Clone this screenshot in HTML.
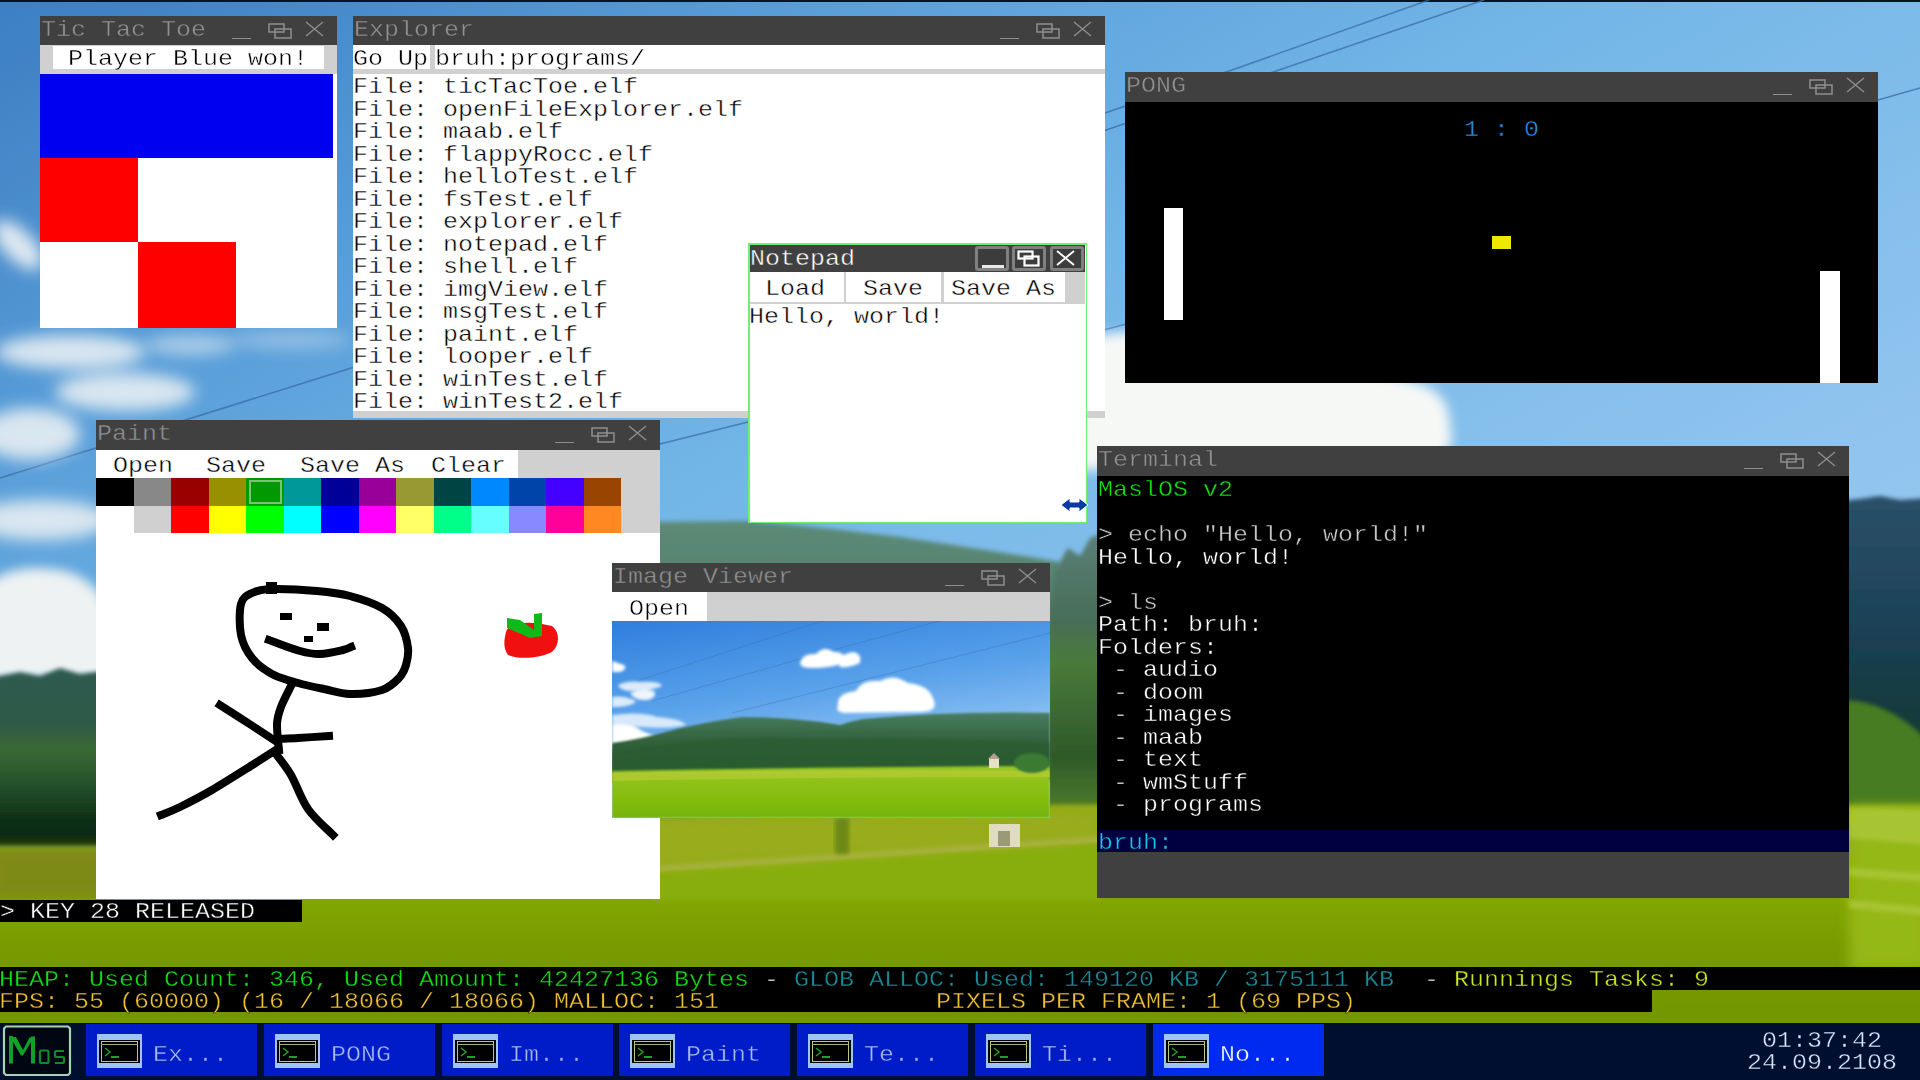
<!DOCTYPE html><html><head><meta charset="utf-8"><style>
html,body{margin:0;padding:0}
body{width:1920px;height:1080px;overflow:hidden;position:relative;background:#6aa8dc}
.r{position:absolute}
.t{position:absolute;font-family:"Liberation Mono",monospace;font-size:22px;line-height:22.5px;white-space:pre;transform-origin:0 0;transform:scaleX(1.136)}
</style></head><body>
<svg class="r" style="left:0;top:0" width="1920" height="1080" viewBox="0 0 1920 1080">
<defs>
<linearGradient id="sky" gradientUnits="userSpaceOnUse" x1="0" y1="0" x2="901" y2="1641">
<stop offset="0" stop-color="#3c80c4"/>
<stop offset="0.06" stop-color="#4486c7"/>
<stop offset="0.19" stop-color="#559bd7"/>
<stop offset="0.405" stop-color="#72b6e7"/>
<stop offset="0.68" stop-color="#90c4ee"/>
<stop offset="1" stop-color="#a0ccf0"/>
</linearGradient>
<linearGradient id="field" gradientUnits="userSpaceOnUse" x1="0" y1="800" x2="0" y2="1080">
<stop offset="0" stop-color="#96aa14"/>
<stop offset="0.3" stop-color="#86aa04"/>
<stop offset="0.55" stop-color="#769a00"/>
<stop offset="1" stop-color="#709400"/>
</linearGradient>
<linearGradient id="hill" gradientUnits="userSpaceOnUse" x1="0" y1="520" x2="0" y2="830">
<stop offset="0" stop-color="#5c8a78"/>
<stop offset="0.4" stop-color="#507e66"/>
<stop offset="1" stop-color="#4a7a48"/>
</linearGradient>
<linearGradient id="trees" gradientUnits="userSpaceOnUse" x1="0" y1="540" x2="0" y2="810">
<stop offset="0" stop-color="#587e76"/>
<stop offset="0.3" stop-color="#486e58"/>
<stop offset="0.45" stop-color="#4a7a3c"/>
<stop offset="0.8" stop-color="#2e5a28"/>
<stop offset="1" stop-color="#4e7c2c"/>
</linearGradient>
<linearGradient id="lforest" gradientUnits="userSpaceOnUse" x1="0" y1="670" x2="0" y2="848">
<stop offset="0" stop-color="#2e5a50"/>
<stop offset="0.3" stop-color="#2e5a48"/>
<stop offset="0.45" stop-color="#3a6a34"/>
<stop offset="0.65" stop-color="#24502a"/>
<stop offset="0.85" stop-color="#0e2e14"/>
<stop offset="1" stop-color="#0a2810"/>
</linearGradient>
<linearGradient id="rforest" gradientUnits="userSpaceOnUse" x1="0" y1="498" x2="0" y2="808">
<stop offset="0" stop-color="#2a5068"/>
<stop offset="0.4" stop-color="#1c4258"/>
<stop offset="0.7" stop-color="#143a3c"/>
<stop offset="1" stop-color="#16382a"/>
</linearGradient>
<filter id="b16" x="-50%" y="-50%" width="200%" height="200%"><feGaussianBlur stdDeviation="14"/></filter>
<filter id="b8" x="-50%" y="-50%" width="200%" height="200%"><feGaussianBlur stdDeviation="8"/></filter>
<filter id="b6" x="-50%" y="-50%" width="200%" height="200%"><feGaussianBlur stdDeviation="6"/></filter>
<filter id="b2" x="-10%" y="-10%" width="120%" height="120%"><feGaussianBlur stdDeviation="2"/></filter>
</defs>
<rect width="1920" height="1080" fill="url(#sky)"/>
<rect y="0" width="1920" height="2" fill="#0a1420"/>
<!-- power lines -->
<g stroke="#3a6aa8" stroke-width="1.6" opacity="0.75" fill="none">
<path d="M0 478 L345 370 L1232 70 L1429 0"/>
<path d="M800 235 L1115 127 L1279 70 L1484 0"/>
<path d="M400 509 L660 444 L748 422 L1115 327 L1130 323"/>
<path d="M1878 100 L1920 88"/>
</g>
<!-- clouds -->
<g filter="url(#b8)" fill="#e8eef2">
<ellipse cx="18" cy="245" rx="32" ry="15" opacity="0.95" transform="rotate(45 18 245)"/>
<ellipse cx="70" cy="352" rx="75" ry="17" opacity="0.9"/>
<ellipse cx="190" cy="345" rx="45" ry="10" opacity="0.6"/>
<ellipse cx="290" cy="340" rx="60" ry="9" opacity="0.4"/>
<ellipse cx="125" cy="392" rx="70" ry="19" opacity="0.9"/>
<ellipse cx="30" cy="434" rx="50" ry="26" opacity="0.9"/>
<ellipse cx="40" cy="520" rx="70" ry="20" opacity="0.9"/>
</g>
<g filter="url(#b6)" fill="#eef2f2">
<path d="M-30 600 Q0 560 60 570 Q110 580 115 640 L115 680 L-30 680Z"/>
<path d="M1070 340 L1120 332 Q1200 330 1300 360 Q1380 370 1420 384 Q1440 390 1448 410 L1452 440 L1440 470 L1070 470Z" fill="#f6f8f6"/>
</g>
<!-- middle hill -->
<path filter="url(#b2)" fill="url(#hill)" d="M650 522 L750 521 Q830 528 900 537 Q1000 552 1060 562 L1060 830 L650 830Z"/>
<path filter="url(#b2)" fill="url(#trees)" d="M1048 620 L1055 570 L1068 548 L1080 556 L1090 538 L1105 532 L1105 810 L1048 810Z"/>
<!-- left forest -->
<path filter="url(#b2)" fill="url(#lforest)" d="M-10 678 L20 672 L40 676 L60 668 L80 674 L110 670 L110 848 L-10 848Z"/>
<!-- right forest -->
<path filter="url(#b2)" fill="url(#rforest)" d="M1830 502 L1860 499 L1880 496 L1900 500 L1930 498 L1930 810 L1830 810Z"/>
<path filter="url(#b2)" fill="#467c22" d="M1840 810 L1840 700 Q1870 700 1895 715 Q1920 730 1930 745 L1930 810Z"/>
<!-- field -->
<path filter="url(#b2)" fill="url(#field)" d="M-10 847 L650 847 L650 818 L1060 805 L1930 805 L1930 1090 L-10 1090Z"/>
<path filter="url(#b6)" fill="#98ac1c" d="M650 818 L1100 810 L1100 840 L650 868Z"/>
<path filter="url(#b2)" fill="#b0b450" opacity="0.7" d="M650 866 L1100 836 L1100 844 L650 874Z"/>
<path filter="url(#b2)" fill="#88ae08" d="M650 874 L1100 844 L1100 900 L650 900Z"/>
<path filter="url(#b6)" fill="#7e8a14" d="M-10 847 L110 847 L110 900 L-10 900Z"/>
<path filter="url(#b6)" fill="#94b814" d="M1849 806 L1930 806 L1930 970 L1849 970Z"/>
<g filter="url(#b2)" fill="#b0ca40" opacity="0.7">
<path d="M1849 808 L1930 810 L1930 845 L1849 838Z"/>
<path d="M1849 868 L1930 874 L1930 882 L1849 876Z"/>
<path d="M1849 900 L1930 908 L1930 916 L1849 908Z"/>
</g>
<rect x="989" y="824" width="31" height="23" fill="#e0dcc4"/>
<rect x="998" y="831" width="12" height="15" fill="#9a9a78"/>
<rect x="835" y="818" width="14" height="36" fill="#5a7a18" opacity="0.7" filter="url(#b2)"/>
</svg>

<div class="r" style="left:40px;top:16px;width:297px;height:29px;background:#404040;"></div>
<div class="t" style="left:41px;top:20px;color:#909090;-webkit-text-stroke:0.4px #404040;">Tic Tac Toe</div>
<div class="r" style="left:232px;top:37.5px;width:19px;height:1.5px;background:#8e8e8e;"></div>
<svg class="r" style="left:268px;top:23px" width="25" height="16"><rect x="1" y="1" width="15" height="8" fill="none" stroke="#8e8e8e" stroke-width="1.5"/><rect x="7" y="6" width="16" height="9" fill="none" stroke="#8e8e8e" stroke-width="1.5"/></svg>
<svg class="r" style="left:305px;top:21px" width="20" height="16"><path d="M1 1L18 15M18 1L1 15" stroke="#8e8e8e" stroke-width="1.4"/></svg>
<div class="r" style="left:40px;top:45px;width:297px;height:29px;background:#d0d0d0;"></div>
<div class="r" style="left:53px;top:46px;width:271px;height:23px;background:#fff;"></div>
<div class="t" style="left:68px;top:49px;color:#000;-webkit-text-stroke:0.4px #fff;">Player Blue won!</div>
<div class="r" style="left:40px;top:74px;width:297px;height:254px;background:#fff;"></div>
<div class="r" style="left:40px;top:74px;width:293px;height:84px;background:#0000f0;"></div>
<div class="r" style="left:40px;top:158px;width:98px;height:84px;background:#ff0000;"></div>
<div class="r" style="left:138px;top:242px;width:98px;height:86px;background:#ff0000;"></div>
<div class="r" style="left:353px;top:16px;width:752px;height:29px;background:#404040;"></div>
<div class="t" style="left:354px;top:20px;color:#909090;-webkit-text-stroke:0.4px #404040;">Explorer</div>
<div class="r" style="left:1000px;top:37.5px;width:19px;height:1.5px;background:#8e8e8e;"></div>
<svg class="r" style="left:1036px;top:23px" width="25" height="16"><rect x="1" y="1" width="15" height="8" fill="none" stroke="#8e8e8e" stroke-width="1.5"/><rect x="7" y="6" width="16" height="9" fill="none" stroke="#8e8e8e" stroke-width="1.5"/></svg>
<svg class="r" style="left:1073px;top:21px" width="20" height="16"><path d="M1 1L18 15M18 1L1 15" stroke="#8e8e8e" stroke-width="1.4"/></svg>
<div class="r" style="left:353px;top:45px;width:752px;height:29px;background:#fff;"></div>
<div class="r" style="left:430px;top:45px;width:5px;height:24px;background:#d0d0d0;"></div>
<div class="r" style="left:353px;top:69px;width:752px;height:5px;background:#d0d0d0;"></div>
<div class="t" style="left:353px;top:49px;color:#000;-webkit-text-stroke:0.4px #fff;">Go Up</div>
<div class="t" style="left:435px;top:49px;color:#000;-webkit-text-stroke:0.4px #fff;">bruh:programs/</div>
<div class="r" style="left:353px;top:74px;width:752px;height:344px;background:#fff;"></div>
<div class="t" style="left:353px;top:77.0px;color:#000;-webkit-text-stroke:0.4px #fff;">File: ticTacToe.elf</div>
<div class="t" style="left:353px;top:99.5px;color:#000;-webkit-text-stroke:0.4px #fff;">File: openFileExplorer.elf</div>
<div class="t" style="left:353px;top:122.0px;color:#000;-webkit-text-stroke:0.4px #fff;">File: maab.elf</div>
<div class="t" style="left:353px;top:144.5px;color:#000;-webkit-text-stroke:0.4px #fff;">File: flappyRocc.elf</div>
<div class="t" style="left:353px;top:167.0px;color:#000;-webkit-text-stroke:0.4px #fff;">File: helloTest.elf</div>
<div class="t" style="left:353px;top:189.5px;color:#000;-webkit-text-stroke:0.4px #fff;">File: fsTest.elf</div>
<div class="t" style="left:353px;top:212.0px;color:#000;-webkit-text-stroke:0.4px #fff;">File: explorer.elf</div>
<div class="t" style="left:353px;top:234.5px;color:#000;-webkit-text-stroke:0.4px #fff;">File: notepad.elf</div>
<div class="t" style="left:353px;top:257.0px;color:#000;-webkit-text-stroke:0.4px #fff;">File: shell.elf</div>
<div class="t" style="left:353px;top:279.5px;color:#000;-webkit-text-stroke:0.4px #fff;">File: imgView.elf</div>
<div class="t" style="left:353px;top:302.0px;color:#000;-webkit-text-stroke:0.4px #fff;">File: msgTest.elf</div>
<div class="t" style="left:353px;top:324.5px;color:#000;-webkit-text-stroke:0.4px #fff;">File: paint.elf</div>
<div class="t" style="left:353px;top:347.0px;color:#000;-webkit-text-stroke:0.4px #fff;">File: looper.elf</div>
<div class="t" style="left:353px;top:369.5px;color:#000;-webkit-text-stroke:0.4px #fff;">File: winTest.elf</div>
<div class="t" style="left:353px;top:392.0px;color:#000;-webkit-text-stroke:0.4px #fff;">File: winTest2.elf</div>
<div class="r" style="left:353px;top:411px;width:752px;height:7px;background:#d0d0d0;"></div>
<div class="r" style="left:1125px;top:72px;width:753px;height:30px;background:#404040;"></div>
<div class="t" style="left:1126px;top:76px;color:#909090;-webkit-text-stroke:0.4px #404040;">PONG</div>
<div class="r" style="left:1773px;top:93.5px;width:19px;height:1.5px;background:#8e8e8e;"></div>
<svg class="r" style="left:1809px;top:79px" width="25" height="16"><rect x="1" y="1" width="15" height="8" fill="none" stroke="#8e8e8e" stroke-width="1.5"/><rect x="7" y="6" width="16" height="9" fill="none" stroke="#8e8e8e" stroke-width="1.5"/></svg>
<svg class="r" style="left:1846px;top:77px" width="20" height="16"><path d="M1 1L18 15M18 1L1 15" stroke="#8e8e8e" stroke-width="1.4"/></svg>
<div class="r" style="left:1125px;top:102px;width:753px;height:281px;background:#000;"></div>
<div class="t" style="left:1464px;top:120px;color:#2a8ee8;-webkit-text-stroke:0.4px #000;">1 : 0</div>
<div class="r" style="left:1164px;top:208px;width:19px;height:112px;background:#fff;"></div>
<div class="r" style="left:1492px;top:236px;width:19px;height:13px;background:#f0e800;"></div>
<div class="r" style="left:1820px;top:271px;width:20px;height:112px;background:#fff;"></div>
<div class="r" style="left:748px;top:243px;width:339px;height:280px;background:#70f070;"></div>
<div class="r" style="left:749.5px;top:244.5px;width:336.0px;height:277.0px;background:#fff;"></div>
<div class="r" style="left:750px;top:245px;width:335px;height:27px;background:#404040;"></div>
<div class="t" style="left:750px;top:249px;color:#ffffff;-webkit-text-stroke:0.4px #404040;">Notepad</div>
<div class="r" style="left:975px;top:246px;width:34px;height:25px;background:#808080;border-radius:3px"></div>
<div class="r" style="left:978px;top:249px;width:28px;height:19px;background:#3c3c3c;"></div>
<div class="r" style="left:1012px;top:246px;width:34px;height:25px;background:#808080;border-radius:3px"></div>
<div class="r" style="left:1015px;top:249px;width:28px;height:19px;background:#3c3c3c;"></div>
<div class="r" style="left:1050px;top:246px;width:34px;height:25px;background:#808080;border-radius:3px"></div>
<div class="r" style="left:1053px;top:249px;width:28px;height:19px;background:#3c3c3c;"></div>
<div class="r" style="left:982px;top:265px;width:22px;height:3px;background:#e8e8e8;"></div>
<svg class="r" style="left:1017px;top:250px" width="26" height="17"><rect x="1.5" y="1.5" width="14" height="7" fill="none" stroke="#fff" stroke-width="2.2"/><rect x="7.5" y="6.5" width="14" height="9" fill="none" stroke="#fff" stroke-width="2.2"/></svg>
<svg class="r" style="left:1055px;top:249px" width="22" height="18"><path d="M2 2L19 16M19 2L2 16" stroke="#fff" stroke-width="1.8"/></svg>
<div class="r" style="left:750px;top:272px;width:335px;height:32px;background:#d0d0d0;"></div>
<div class="r" style="left:750px;top:272px;width:94px;height:30px;background:#fff;"></div>
<div class="r" style="left:846px;top:272px;width:95px;height:30px;background:#fff;"></div>
<div class="r" style="left:944px;top:272px;width:121px;height:30px;background:#fff;"></div>
<div class="t" style="left:765px;top:279px;color:#000;-webkit-text-stroke:0.4px #fff;">Load</div>
<div class="t" style="left:863px;top:279px;color:#000;-webkit-text-stroke:0.4px #fff;">Save</div>
<div class="t" style="left:951px;top:279px;color:#000;-webkit-text-stroke:0.4px #fff;">Save As</div>
<div class="t" style="left:749px;top:307px;color:#000;-webkit-text-stroke:0.4px #fff;">Hello, world!</div>
<svg class="r" style="left:1060px;top:497px" width="30" height="16"><path d="M1 8L10 1V5H19V1L28 8L19 15V11H10V15Z" fill="#0b3aa8" stroke="#fff" stroke-width="1"/></svg>
<div class="r" style="left:96px;top:420px;width:564px;height:30px;background:#404040;"></div>
<div class="t" style="left:97px;top:424px;color:#909090;-webkit-text-stroke:0.4px #404040;">Paint</div>
<div class="r" style="left:555px;top:441.5px;width:19px;height:1.5px;background:#8e8e8e;"></div>
<svg class="r" style="left:591px;top:427px" width="25" height="16"><rect x="1" y="1" width="15" height="8" fill="none" stroke="#8e8e8e" stroke-width="1.5"/><rect x="7" y="6" width="16" height="9" fill="none" stroke="#8e8e8e" stroke-width="1.5"/></svg>
<svg class="r" style="left:628px;top:425px" width="20" height="16"><path d="M1 1L18 15M18 1L1 15" stroke="#8e8e8e" stroke-width="1.4"/></svg>
<div class="r" style="left:96px;top:450px;width:564px;height:83px;background:#d0d0d0;"></div>
<div class="r" style="left:96px;top:450px;width:422px;height:28px;background:#fff;"></div>
<div class="t" style="left:113px;top:456px;color:#000;-webkit-text-stroke:0.4px #fff;">Open</div>
<div class="t" style="left:206px;top:456px;color:#000;-webkit-text-stroke:0.4px #fff;">Save</div>
<div class="t" style="left:300px;top:456px;color:#000;-webkit-text-stroke:0.4px #fff;">Save As</div>
<div class="t" style="left:431px;top:456px;color:#000;-webkit-text-stroke:0.4px #fff;">Clear</div>
<div class="r" style="left:96.0px;top:478px;width:37.5px;height:28px;background:#000000;"></div>
<div class="r" style="left:96.0px;top:506px;width:37.5px;height:27px;background:#ffffff;"></div>
<div class="r" style="left:133.5px;top:478px;width:37.5px;height:28px;background:#888888;"></div>
<div class="r" style="left:133.5px;top:506px;width:37.5px;height:27px;background:#d0d0d0;"></div>
<div class="r" style="left:171.0px;top:478px;width:37.5px;height:28px;background:#990000;"></div>
<div class="r" style="left:171.0px;top:506px;width:37.5px;height:27px;background:#ff0000;"></div>
<div class="r" style="left:208.5px;top:478px;width:37.5px;height:28px;background:#999000;"></div>
<div class="r" style="left:208.5px;top:506px;width:37.5px;height:27px;background:#ffff00;"></div>
<div class="r" style="left:246.0px;top:478px;width:37.5px;height:28px;background:#009900;"></div>
<div class="r" style="left:246.0px;top:506px;width:37.5px;height:27px;background:#00ff00;"></div>
<div class="r" style="left:283.5px;top:478px;width:37.5px;height:28px;background:#009999;"></div>
<div class="r" style="left:283.5px;top:506px;width:37.5px;height:27px;background:#00ffff;"></div>
<div class="r" style="left:321.0px;top:478px;width:37.5px;height:28px;background:#000099;"></div>
<div class="r" style="left:321.0px;top:506px;width:37.5px;height:27px;background:#0000ff;"></div>
<div class="r" style="left:358.5px;top:478px;width:37.5px;height:28px;background:#990099;"></div>
<div class="r" style="left:358.5px;top:506px;width:37.5px;height:27px;background:#ff00ff;"></div>
<div class="r" style="left:396.0px;top:478px;width:37.5px;height:28px;background:#999933;"></div>
<div class="r" style="left:396.0px;top:506px;width:37.5px;height:27px;background:#ffff66;"></div>
<div class="r" style="left:433.5px;top:478px;width:37.5px;height:28px;background:#004444;"></div>
<div class="r" style="left:433.5px;top:506px;width:37.5px;height:27px;background:#00ff88;"></div>
<div class="r" style="left:471.0px;top:478px;width:37.5px;height:28px;background:#0088ff;"></div>
<div class="r" style="left:471.0px;top:506px;width:37.5px;height:27px;background:#66ffff;"></div>
<div class="r" style="left:508.5px;top:478px;width:37.5px;height:28px;background:#0044aa;"></div>
<div class="r" style="left:508.5px;top:506px;width:37.5px;height:27px;background:#8888ff;"></div>
<div class="r" style="left:546.0px;top:478px;width:37.5px;height:28px;background:#4400ff;"></div>
<div class="r" style="left:546.0px;top:506px;width:37.5px;height:27px;background:#ff0099;"></div>
<div class="r" style="left:583.5px;top:478px;width:37.5px;height:28px;background:#994400;"></div>
<div class="r" style="left:583.5px;top:506px;width:37.5px;height:27px;background:#ff8822;"></div>
<div class="r" style="left:248.5px;top:480px;width:33.5px;height:24px;background:none;border:2px solid #7cc07c;box-sizing:border-box"></div>
<div class="r" style="left:96px;top:533px;width:564px;height:366px;background:#fff;"></div>
<svg class="r" style="left:96px;top:533px" width="564" height="366" viewBox="96 533 564 366">
<g fill="none" stroke="#000" stroke-width="8" stroke-linecap="square" stroke-linejoin="round">
<path d="M272.0 589.0 C282.8 588.7 304.0 589.8 317.0 591.0 C330.0 592.2 339.2 593.2 350.0 596.0 C360.8 598.8 373.5 603.0 382.0 608.0 C390.5 613.0 396.7 619.3 401.0 626.0 C405.3 632.7 407.2 641.5 408.0 648.0 C408.8 654.5 407.5 660.0 406.0 665.0 C404.5 670.0 403.0 673.8 399.0 678.0 C395.0 682.2 390.2 687.3 382.0 690.0 C373.8 692.7 359.7 694.2 350.0 694.0 C340.3 693.8 332.7 690.8 324.0 689.0 C315.3 687.2 306.7 685.5 298.0 683.0 C289.3 680.5 279.7 678.2 272.0 674.0 C264.3 669.8 257.2 664.5 252.0 658.0 C246.8 651.5 242.8 644.0 241.0 635.0 C239.2 626.0 239.2 611.0 241.0 604.0 C242.8 597.0 246.8 595.5 252.0 593.0 C257.2 590.5 261.2 589.3 272.0 589.0Z"/>
<path d="M269.0 640.0 C274.2 641.8 291.5 648.7 300.0 651.0 C308.5 653.3 312.8 654.2 320.0 654.0 C327.2 653.8 337.8 651.2 343.0 650.0 C348.2 648.8 349.7 647.5 351.0 647.0"/>
<path d="M291.0 686.0 C289.3 689.5 283.3 700.7 281.0 707.0 C278.7 713.3 277.3 716.8 277.0 724.0 C276.7 731.2 278.7 745.7 279.0 750.0"/>
<path d="M220.0 705.0 C224.7 708.0 238.5 716.8 248.0 723.0 C257.5 729.2 272.2 738.8 277.0 742.0"/>
<path d="M277.0 739.0 C280.5 738.8 289.3 738.5 298.0 738.0 C306.7 737.5 323.8 736.3 329.0 736.0"/>
<path d="M276.0 750.0 C272.3 752.3 264.7 757.3 254.0 764.0 C243.3 770.7 224.3 782.8 212.0 790.0 C199.7 797.2 188.5 802.8 180.0 807.0 C171.5 811.2 164.2 813.7 161.0 815.0"/>
<path d="M276.0 754.0 C278.5 757.5 285.7 765.8 291.0 775.0 C296.3 784.2 301.0 799.0 308.0 809.0 C315.0 819.0 328.8 830.7 333.0 835.0"/>
</g>
<rect x="266" y="582" width="11" height="12" fill="#000"/>
<rect x="280" y="613" width="12" height="7" fill="#000"/>
<rect x="317" y="623" width="12" height="8" fill="#000"/>
<rect x="304" y="636" width="9" height="6" fill="#000"/>
<path d="M506 632 C508 622 530 620 552 626 C560 632 560 645 552 652 C540 658 520 660 508 655 C503 648 504 640 506 632Z" fill="#f01010"/>
<path d="M507 618 L520 620 L534 630 L534 614 L542 613 L542 636 L530 638 L507 628Z" fill="#10b818"/>
</svg>

<div class="r" style="left:612px;top:563px;width:438px;height:29px;background:#404040;"></div>
<div class="t" style="left:613px;top:567px;color:#909090;-webkit-text-stroke:0.4px #404040;">Image Viewer</div>
<div class="r" style="left:945px;top:584.5px;width:19px;height:1.5px;background:#8e8e8e;"></div>
<svg class="r" style="left:981px;top:570px" width="25" height="16"><rect x="1" y="1" width="15" height="8" fill="none" stroke="#8e8e8e" stroke-width="1.5"/><rect x="7" y="6" width="16" height="9" fill="none" stroke="#8e8e8e" stroke-width="1.5"/></svg>
<svg class="r" style="left:1018px;top:568px" width="20" height="16"><path d="M1 1L18 15M18 1L1 15" stroke="#8e8e8e" stroke-width="1.4"/></svg>
<div class="r" style="left:612px;top:592px;width:438px;height:29px;background:#d0d0d0;"></div>
<div class="r" style="left:612px;top:592px;width:95px;height:29px;background:#fff;"></div>
<div class="t" style="left:629px;top:599px;color:#000;-webkit-text-stroke:0.4px #fff;">Open</div>
<svg class="r" style="left:612px;top:621px" width="438" height="197" viewBox="0 0 438 197">
<defs>
<linearGradient id="vsky" x1="0" y1="0" x2="0.3" y2="1">
<stop offset="0" stop-color="#2f7ede"/>
<stop offset="0.45" stop-color="#5aa2ea"/>
<stop offset="0.75" stop-color="#8cc2f2"/>
<stop offset="1" stop-color="#a8d4f4"/>
</linearGradient>
<linearGradient id="vfield" x1="0" y1="0" x2="0" y2="1">
<stop offset="0" stop-color="#9cc828"/>
<stop offset="0.4" stop-color="#8cc014"/>
<stop offset="1" stop-color="#78b40a"/>
</linearGradient>
<linearGradient id="vhill" x1="0" y1="0" x2="0" y2="1">
<stop offset="0" stop-color="#4a7c62"/>
<stop offset="0.5" stop-color="#2e5e36"/>
<stop offset="1" stop-color="#2a5a26"/>
</linearGradient>
<filter id="vb2" x="-30%" y="-30%" width="160%" height="160%"><feGaussianBlur stdDeviation="1.6"/></filter>
<filter id="vb1" x="-10%" y="-10%" width="120%" height="120%"><feGaussianBlur stdDeviation="0.8"/></filter>
</defs>
<rect width="438" height="197" fill="url(#vsky)"/>
<g stroke="#3a68a8" stroke-width="0.8" opacity="0.45" fill="none">
<path d="M25 60 L188 7 L280 -20"/>
<path d="M40 80 L188 38 L438 -30"/>
<path d="M120 92 L188 75 L438 12"/>
</g>
<g filter="url(#vb2)" fill="#ffffff">
<path d="M226 85 Q224 72 244 70 Q250 58 268 60 Q282 52 296 62 Q318 64 322 80 Q326 90 310 91 L232 92 Q222 90 226 85Z"/>
<path d="M188 42 Q190 32 204 33 Q212 24 222 31 Q234 30 232 42 Q220 47 200 47 Q188 47 188 42Z"/>
<path d="M226 40 Q230 32 242 31 Q250 33 248 42 Q238 47 228 46Z"/>
<path d="M0 40 L12 44 Q16 48 8 51 L0 51Z"/>
<path d="M6 64 Q15 59 30 61 Q48 60 50 65 Q40 70 20 70 Q8 70 6 64Z" opacity="0.8"/>
<path d="M18 72 Q30 67 42 70 Q46 76 36 79 Q22 80 18 72Z" opacity="0.9"/>
<path d="M0 76 Q12 74 24 80 Q20 86 0 86Z" opacity="0.8"/>
<path d="M0 94 Q30 90 45 96 Q70 98 74 104 Q60 108 30 106 Q10 104 0 104Z" opacity="0.75"/>
<path d="M0 104 Q20 102 30 110 Q42 114 46 120 Q30 124 0 126Z"/>
</g>
<path filter="url(#vb1)" fill="url(#vhill)" d="M0 122 Q30 118 65 108 Q100 100 130 96 Q180 96 228 104 Q240 100 251 98 Q340 90 438 92 L438 160 L0 160Z"/>
<path filter="url(#vb2)" fill="#2c5c30" opacity="0.75" d="M0 132 Q100 112 200 118 Q300 116 438 122 L438 150 L0 152Z"/>
<path filter="url(#vb1)" fill="url(#vfield)" d="M0 150 Q200 146 438 145 L438 197 L0 197Z"/>
<path fill="#c8d040" opacity="0.45" d="M0 152 Q200 148 438 150 L438 156 Q200 156 0 160Z"/>
<rect x="377" y="137" width="10" height="10" fill="#e8e0c8"/>
<path d="M376 138 L382 132 L388 138Z" fill="#b8a090"/>
<ellipse cx="420" cy="142" rx="18" ry="10" fill="#3a7a30" filter="url(#vb1)"/>
</svg>

<div class="r" style="left:1097px;top:446px;width:752px;height:30px;background:#404040;"></div>
<div class="t" style="left:1098px;top:450px;color:#909090;-webkit-text-stroke:0.4px #404040;">Terminal</div>
<div class="r" style="left:1744px;top:467.5px;width:19px;height:1.5px;background:#8e8e8e;"></div>
<svg class="r" style="left:1780px;top:453px" width="25" height="16"><rect x="1" y="1" width="15" height="8" fill="none" stroke="#8e8e8e" stroke-width="1.5"/><rect x="7" y="6" width="16" height="9" fill="none" stroke="#8e8e8e" stroke-width="1.5"/></svg>
<svg class="r" style="left:1817px;top:451px" width="20" height="16"><path d="M1 1L18 15M18 1L1 15" stroke="#8e8e8e" stroke-width="1.4"/></svg>
<div class="r" style="left:1097px;top:476px;width:752px;height:422px;background:#000;"></div>
<div class="t" style="left:1098px;top:480.0px;color:#10e010;-webkit-text-stroke:0.4px #000;">MaslOS v2</div>
<div class="t" style="left:1098px;top:525.0px;color:#c8c8c8;-webkit-text-stroke:0.4px #000;">&gt; echo "Hello, world!"</div>
<div class="t" style="left:1098px;top:547.5px;color:#ffffff;-webkit-text-stroke:0.4px #000;">Hello, world!</div>
<div class="t" style="left:1098px;top:592.5px;color:#c8c8c8;-webkit-text-stroke:0.4px #000;">&gt; ls</div>
<div class="t" style="left:1098px;top:615.0px;color:#fff;-webkit-text-stroke:0.4px #000;">Path: bruh:</div>
<div class="t" style="left:1098px;top:637.5px;color:#fff;-webkit-text-stroke:0.4px #000;">Folders:</div>
<div class="t" style="left:1098px;top:660.0px;color:#fff;-webkit-text-stroke:0.4px #000;"> - audio</div>
<div class="t" style="left:1098px;top:682.5px;color:#fff;-webkit-text-stroke:0.4px #000;"> - doom</div>
<div class="t" style="left:1098px;top:705.0px;color:#fff;-webkit-text-stroke:0.4px #000;"> - images</div>
<div class="t" style="left:1098px;top:727.5px;color:#fff;-webkit-text-stroke:0.4px #000;"> - maab</div>
<div class="t" style="left:1098px;top:750.0px;color:#fff;-webkit-text-stroke:0.4px #000;"> - text</div>
<div class="t" style="left:1098px;top:772.5px;color:#fff;-webkit-text-stroke:0.4px #000;"> - wmStuff</div>
<div class="t" style="left:1098px;top:795.0px;color:#fff;-webkit-text-stroke:0.4px #000;"> - programs</div>
<div class="r" style="left:1097px;top:830px;width:752px;height:22px;background:#000040;"></div>
<div class="t" style="left:1098px;top:833px;color:#10c8f0;-webkit-text-stroke:0.4px #000040;">bruh:</div>
<div class="r" style="left:1097px;top:852px;width:752px;height:46px;background:#404040;"></div>
<div class="r" style="left:0px;top:900px;width:302px;height:22px;background:#000;"></div>
<div class="t" style="left:0px;top:902px;color:#fff;-webkit-text-stroke:0.4px #000;">&gt; KEY 28 RELEASED</div>
<div class="r" style="left:0px;top:967px;width:1920px;height:23px;background:#000;"></div>
<div class="r" style="left:0px;top:990px;width:1652px;height:22px;background:#000;"></div>
<div class="t" style="left:-1px;top:970px;color:#10e010;-webkit-text-stroke:0.4px #000;">HEAP: Used Count: 346, Used Amount: 42427136 Bytes</div>
<div class="t" style="left:764px;top:970px;color:#fff;-webkit-text-stroke:0.4px #000;">-</div>
<div class="t" style="left:794px;top:970px;color:#188c9a;-webkit-text-stroke:0.4px #000;">GLOB ALLOC: Used: 149120 KB / 3175111 KB</div>
<div class="t" style="left:1424px;top:970px;color:#fff;-webkit-text-stroke:0.4px #000;">-</div>
<div class="t" style="left:1454px;top:970px;color:#c8e820;-webkit-text-stroke:0.4px #000;">Runnings Tasks: 9</div>
<div class="t" style="left:-1px;top:992px;color:#f0c030;-webkit-text-stroke:0.4px #000;">FPS: 55 (60000) (16 / 18066 / 18066) MALLOC: 151</div>
<div class="t" style="left:936px;top:992px;color:#f0c030;-webkit-text-stroke:0.4px #000;">PIXELS PER FRAME: 1 (69 PPS)</div>
<div class="r" style="left:0px;top:1023px;width:1920px;height:57px;background:#000e30;"></div>
<svg class="r" style="left:0;top:1020px" width="80" height="60" viewBox="0 1020 80 60"><path d="M6 1026.5 H68 L70 1028.5 V1073 L68 1075 H6 L4 1073 V1028.5Z" fill="#000612" stroke="#a4d4b4" stroke-width="2.2"/><g fill="#14a028"><rect x="9" y="1036" width="4" height="27.5"/><rect x="31" y="1036.5" width="4" height="27"/><path d="M12.5 1037 L16 1037 L23 1050 L29.5 1037.5 L31.5 1037.5 L31.5 1041 L23 1055.5 L21 1055.5 L12.5 1041Z"/></g><g fill="none" stroke="#12882a" stroke-width="2.2"><rect x="40" y="1050.5" width="8.5" height="12.5" rx="1.5"/><path d="M64 1051 H56.5 Q55 1051 55 1052.5 V1055.5 Q55 1057 56.5 1057 H62.5 Q64 1057 64 1058.5 V1061.5 Q64 1063 62.5 1063 H55"/></g></svg>
<div class="r" style="left:86.0px;top:1024px;width:171.0px;height:52px;background:#001cc8;"></div>
<div class="r" style="left:97.0px;top:1034px;width:45.0px;height:34px;background:#9ec4f8;"></div>
<div class="r" style="left:99.0px;top:1040px;width:41.0px;height:23px;background:#000;"></div>
<div class="r" style="left:101.0px;top:1041px;width:37.0px;height:21px;background:none;border:1px solid #b8c878;box-sizing:border-box"></div>
<div class="r" style="left:101.0px;top:1044px;width:37.0px;height:1px;background:#a0b070;"></div>
<svg class="r" style="left:103.0px;top:1046px" width="20" height="14"><path d="M2 2L7 6L2 10" fill="none" stroke="#20a020" stroke-width="1.5"/><path d="M8 11H16" stroke="#20a020" stroke-width="2"/></svg>
<div class="t" style="left:153.0px;top:1045px;color:#a8b8f0;-webkit-text-stroke:0.4px #001cc8;">Ex...</div>
<div class="r" style="left:263.8px;top:1024px;width:171.0px;height:52px;background:#001cc8;"></div>
<div class="r" style="left:274.8px;top:1034px;width:45.0px;height:34px;background:#9ec4f8;"></div>
<div class="r" style="left:276.8px;top:1040px;width:41.0px;height:23px;background:#000;"></div>
<div class="r" style="left:278.8px;top:1041px;width:37.0px;height:21px;background:none;border:1px solid #b8c878;box-sizing:border-box"></div>
<div class="r" style="left:278.8px;top:1044px;width:37.0px;height:1px;background:#a0b070;"></div>
<svg class="r" style="left:280.8px;top:1046px" width="20" height="14"><path d="M2 2L7 6L2 10" fill="none" stroke="#20a020" stroke-width="1.5"/><path d="M8 11H16" stroke="#20a020" stroke-width="2"/></svg>
<div class="t" style="left:330.8px;top:1045px;color:#a8b8f0;-webkit-text-stroke:0.4px #001cc8;">PONG</div>
<div class="r" style="left:441.6px;top:1024px;width:171.0px;height:52px;background:#001cc8;"></div>
<div class="r" style="left:452.6px;top:1034px;width:45.0px;height:34px;background:#9ec4f8;"></div>
<div class="r" style="left:454.6px;top:1040px;width:41.0px;height:23px;background:#000;"></div>
<div class="r" style="left:456.6px;top:1041px;width:37.0px;height:21px;background:none;border:1px solid #b8c878;box-sizing:border-box"></div>
<div class="r" style="left:456.6px;top:1044px;width:37.0px;height:1px;background:#a0b070;"></div>
<svg class="r" style="left:458.6px;top:1046px" width="20" height="14"><path d="M2 2L7 6L2 10" fill="none" stroke="#20a020" stroke-width="1.5"/><path d="M8 11H16" stroke="#20a020" stroke-width="2"/></svg>
<div class="t" style="left:508.6px;top:1045px;color:#a8b8f0;-webkit-text-stroke:0.4px #001cc8;">Im...</div>
<div class="r" style="left:619.4000000000001px;top:1024px;width:171.0px;height:52px;background:#001cc8;"></div>
<div class="r" style="left:630.4000000000001px;top:1034px;width:45.0px;height:34px;background:#9ec4f8;"></div>
<div class="r" style="left:632.4000000000001px;top:1040px;width:41.0px;height:23px;background:#000;"></div>
<div class="r" style="left:634.4000000000001px;top:1041px;width:37.0px;height:21px;background:none;border:1px solid #b8c878;box-sizing:border-box"></div>
<div class="r" style="left:634.4000000000001px;top:1044px;width:37.0px;height:1px;background:#a0b070;"></div>
<svg class="r" style="left:636.4000000000001px;top:1046px" width="20" height="14"><path d="M2 2L7 6L2 10" fill="none" stroke="#20a020" stroke-width="1.5"/><path d="M8 11H16" stroke="#20a020" stroke-width="2"/></svg>
<div class="t" style="left:686.4000000000001px;top:1045px;color:#a8b8f0;-webkit-text-stroke:0.4px #001cc8;">Paint</div>
<div class="r" style="left:797.2px;top:1024px;width:171.0px;height:52px;background:#001cc8;"></div>
<div class="r" style="left:808.2px;top:1034px;width:45.0px;height:34px;background:#9ec4f8;"></div>
<div class="r" style="left:810.2px;top:1040px;width:41.0px;height:23px;background:#000;"></div>
<div class="r" style="left:812.2px;top:1041px;width:37.0px;height:21px;background:none;border:1px solid #b8c878;box-sizing:border-box"></div>
<div class="r" style="left:812.2px;top:1044px;width:37.0px;height:1px;background:#a0b070;"></div>
<svg class="r" style="left:814.2px;top:1046px" width="20" height="14"><path d="M2 2L7 6L2 10" fill="none" stroke="#20a020" stroke-width="1.5"/><path d="M8 11H16" stroke="#20a020" stroke-width="2"/></svg>
<div class="t" style="left:864.2px;top:1045px;color:#a8b8f0;-webkit-text-stroke:0.4px #001cc8;">Te...</div>
<div class="r" style="left:975.0px;top:1024px;width:171.0px;height:52px;background:#001cc8;"></div>
<div class="r" style="left:986.0px;top:1034px;width:45.0px;height:34px;background:#9ec4f8;"></div>
<div class="r" style="left:988.0px;top:1040px;width:41.0px;height:23px;background:#000;"></div>
<div class="r" style="left:990.0px;top:1041px;width:37.0px;height:21px;background:none;border:1px solid #b8c878;box-sizing:border-box"></div>
<div class="r" style="left:990.0px;top:1044px;width:37.0px;height:1px;background:#a0b070;"></div>
<svg class="r" style="left:992.0px;top:1046px" width="20" height="14"><path d="M2 2L7 6L2 10" fill="none" stroke="#20a020" stroke-width="1.5"/><path d="M8 11H16" stroke="#20a020" stroke-width="2"/></svg>
<div class="t" style="left:1042.0px;top:1045px;color:#a8b8f0;-webkit-text-stroke:0.4px #001cc8;">Ti...</div>
<div class="r" style="left:1152.8000000000002px;top:1024px;width:171.0px;height:52px;background:#002af0;"></div>
<div class="r" style="left:1163.8000000000002px;top:1034px;width:45.0px;height:34px;background:#9ec4f8;"></div>
<div class="r" style="left:1165.8000000000002px;top:1040px;width:41.0px;height:23px;background:#000;"></div>
<div class="r" style="left:1167.8000000000002px;top:1041px;width:37.0px;height:21px;background:none;border:1px solid #b8c878;box-sizing:border-box"></div>
<div class="r" style="left:1167.8000000000002px;top:1044px;width:37.0px;height:1px;background:#a0b070;"></div>
<svg class="r" style="left:1169.8000000000002px;top:1046px" width="20" height="14"><path d="M2 2L7 6L2 10" fill="none" stroke="#20a020" stroke-width="1.5"/><path d="M8 11H16" stroke="#20a020" stroke-width="2"/></svg>
<div class="t" style="left:1219.8000000000002px;top:1045px;color:#ffffff;-webkit-text-stroke:0.4px #002af0;">No...</div>
<div class="t" style="left:1762px;top:1031px;color:#d8e8ff;-webkit-text-stroke:0.4px #000e30;">01:37:42</div>
<div class="t" style="left:1747px;top:1053px;color:#d8e8ff;-webkit-text-stroke:0.4px #000e30;">24.09.2108</div>
</body></html>
